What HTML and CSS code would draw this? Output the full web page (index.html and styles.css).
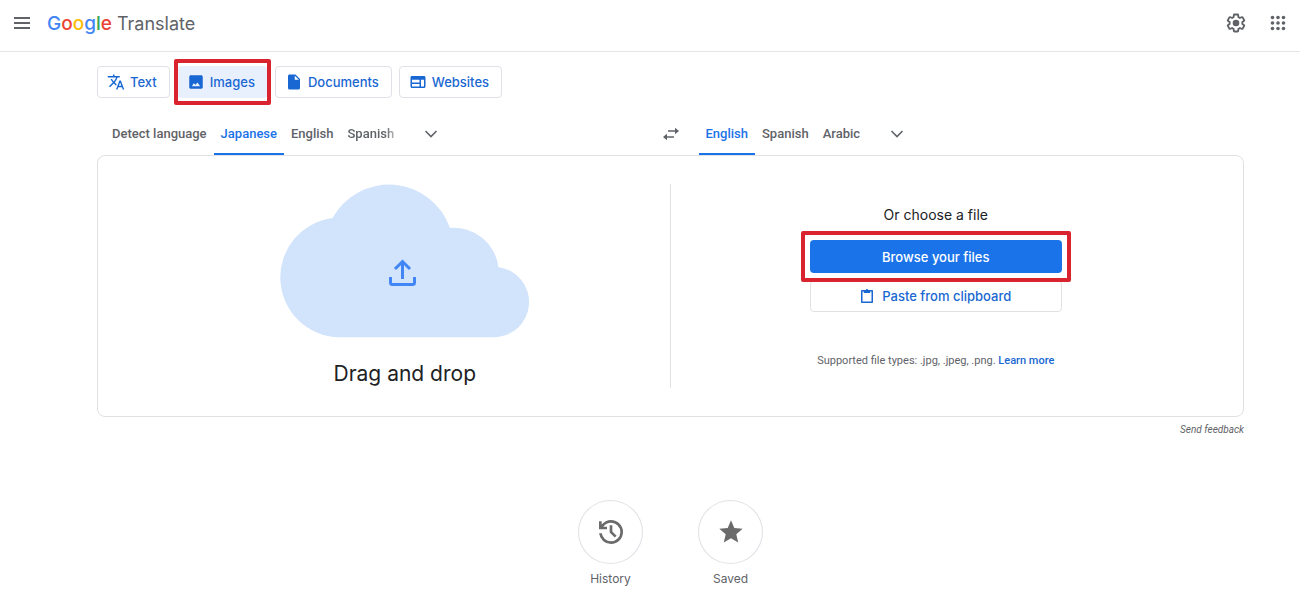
FILE: index.html
```html
<!DOCTYPE html>
<html lang="en">
<head>
<meta charset="utf-8">
<title>Google Translate</title>
<link rel="stylesheet" href="styles.css">
</head>
<body>
<header class="topbar">
  <button class="icon-btn" aria-label="Main menu">
    <svg width="18" height="12" viewBox="0 0 18 12"><path d="M1 1h16M1 6h16M1 11h16" fill="none" stroke="#5f6368" stroke-width="1.8"/></svg>
  </button>
  <a class="brand" href="#"><span class="google"><span class="b">G</span><span class="r">o</span><span class="y">o</span><span class="b">g</span><span class="g">l</span><span class="r">e</span></span><span class="product">Translate</span></a>
  <div class="tools">
    <button class="icon-btn" aria-label="Settings">
      <svg width="22" height="22" viewBox="0 0 24 24"><path d="M13.85 22.25h-3.7c-.74 0-1.36-.54-1.45-1.27l-.27-1.89c-.27-.14-.53-.29-.79-.46l-1.8.72c-.7.26-1.47-.03-1.81-.65L2.2 15.53c-.35-.66-.2-1.44.36-1.88l1.53-1.19c-.01-.15-.02-.3-.02-.46 0-.15.01-.31.02-.46l-1.52-1.19c-.59-.45-.74-1.26-.37-1.88l1.85-3.19c.34-.62 1.11-.9 1.79-.63l1.81.73c.26-.17.52-.32.78-.46l.27-1.91c.09-.7.71-1.25 1.44-1.25h3.7c.74 0 1.36.54 1.45 1.27l.27 1.89c.27.14.53.29.79.46l1.8-.72c.71-.26 1.48.03 1.82.65l1.84 3.18c.36.66.2 1.44-.36 1.88l-1.52 1.19c.01.15.02.3.02.46s-.01.31-.02.46l1.52 1.19c.56.45.72 1.23.37 1.86l-1.86 3.22c-.34.62-1.11.9-1.8.63l-1.8-.72c-.26.17-.52.32-.78.46l-.27 1.91c-.1.68-.72 1.22-1.46 1.22zm-3.23-2h2.76l.37-2.55.53-.22c.44-.18.88-.44 1.34-.78l.45-.34 2.38.96 1.38-2.4-2.03-1.58.07-.56c.03-.26.06-.51.06-.78s-.03-.53-.06-.78l-.07-.56 2.03-1.58-1.39-2.4-2.39.96-.45-.35c-.42-.32-.87-.58-1.33-.77l-.52-.22-.37-2.55h-2.76l-.37 2.55-.53.21c-.44.19-.88.44-1.34.79l-.45.33-2.38-.95-1.39 2.39 2.03 1.58-.07.56a7 7 0 0 0-.06.79c0 .26.02.53.06.78l.07.56-2.03 1.58 1.38 2.4 2.39-.96.45.35c.43.33.86.58 1.33.77l.53.22z" fill="#5f6368"/><circle cx="12" cy="12" r="3.6" fill="#5f6368"/></svg>
    </button>
    <button class="icon-btn" aria-label="Google apps">
      <svg width="16" height="16" viewBox="0 0 16 16" fill="#5f6368"><circle cx="2.5" cy="2.5" r="1.8"/><circle cx="8" cy="2.5" r="1.8"/><circle cx="13.5" cy="2.5" r="1.8"/><circle cx="2.5" cy="8" r="1.8"/><circle cx="8" cy="8" r="1.8"/><circle cx="13.5" cy="8" r="1.8"/><circle cx="2.5" cy="13.5" r="1.8"/><circle cx="8" cy="13.5" r="1.8"/><circle cx="13.5" cy="13.5" r="1.8"/></svg>
    </button>
  </div>
</header>
<main class="page">
  <nav class="modes" aria-label="Translation types">
    <button class="mode"><svg width="18" height="18" viewBox="0 0 24 24" fill="currentColor"><path d="M12.87 15.07l-2.54-2.51.03-.03A17.5 17.5 0 0 0 14.07 6H17V4h-7V2H8v2H1v2h11.17C11.5 7.92 10.44 9.75 9 11.35 8.07 10.32 7.3 9.19 6.69 8h-2c.73 1.63 1.73 3.17 2.98 4.56l-5.09 5.02L4 19l5-5 3.11 3.11.76-2.04zM18.5 10h-2L12 22h2l1.12-3h4.75L21 22h2l-4.5-12zm-2.62 7l1.62-4.33L19.12 17h-3.24z"/></svg>Text</button>
    <button class="mode selected marked"><svg width="18" height="18" viewBox="0 0 24 24" fill="currentColor"><path d="M21 19V5c0-1.100-.9-2-2-2H5c-1.100 0-2 .9-2 2v14c0 1.100.9 2 2 2h14c1.100 0 2-.9 2-2zM6.500 17.500l2.500-4 2.300 2.300 2.700-3.300 3.500 5z"/></svg>Images</button>
    <button class="mode"><svg width="18" height="18" viewBox="0 0 24 24" fill="currentColor"><path d="M6 2c-1.100 0-2 .9-2 2v16c0 1.100.9 2 2 2h12c1.100 0 2-.9 2-2V8l-6-6H6zm7 7V3.500L18.500 9H13z"/></svg>Documents</button>
    <button class="mode"><svg width="18" height="18" viewBox="0 0 24 24" fill="currentColor"><path d="M20 4H4c-1.100 0-2 .9-2 2v12c0 1.100.9 2 2 2h16c1.100 0 2-.9 2-2V6c0-1.100-.9-2-2-2zm-6 14H4v-3.500h10V18zm0-5.500H4V9h10v3.500zm6 5.500h-4V9h4v9z"/></svg>Websites</button>
  </nav>
  <div class="languages">
    <div class="source">
      <button class="lang">Detect language</button><button class="lang active">Japanese</button><button class="lang">English</button><button class="lang faded">Spanish</button>
      <button class="more" aria-label="More source languages"><svg width="14" height="8" viewBox="0 0 14 8"><path d="M1.500 1L7 6.500 12.500 1" fill="none" stroke="#5f6368" stroke-width="1.600"/></svg></button>
    </div>
    <button class="swap" aria-label="Swap languages"><svg width="18" height="14" viewBox="0 0 18 14" fill="#5f6368"><path d="M6 3.200h7V.8L17 4l-4 3.200V4.800H6zM12 9.200H5V6.800L1 10l4 3.200v-2.400h7z"/></svg></button>
    <div class="target">
      <button class="lang active">English</button><button class="lang">Spanish</button><button class="lang">Arabic</button>
      <button class="more" aria-label="More target languages"><svg width="14" height="8" viewBox="0 0 14 8"><path d="M1.500 1L7 6.500 12.500 1" fill="none" stroke="#5f6368" stroke-width="1.600"/></svg></button>
    </div>
  </div>
  <section class="panel">
    <div class="drop">
      <svg width="252" height="154" viewBox="0 0 252 154"><path d="M60 153.200A59.850 59.850 0 0 1 53.500 34A64.500 64.500 0 0 1 171 44A45 45 0 0 1 219.500 83.200A35.150 35.150 0 0 1 215 153.200Z" fill="#d2e3fc"/><g fill="none" stroke="#4285f4" stroke-width="3"><path d="M123.500 95V77M116 85l7.500-7.500 7.500 7.500"/><path d="M111.500 93v5.500q0 2 2 2h20q2 0 2-2V93"/></g></svg>
      <p class="drop-title">Drag and drop</p>
    </div>
    <div class="choose">
      <p class="choose-title">Or choose a file</p>
      <div class="actions">
        <button class="browse marked">Browse your files</button>
        <button class="paste"><svg width="14" height="16" viewBox="0 0 14 16"><path d="M1.750 2.750h10.500v11.500H1.750z" fill="none" stroke="currentColor" stroke-width="1.500" stroke-linejoin="round"/><path d="M3.800 2h1.900a1.400 1.400 0 0 1 2.600 0h1.900v3h-6.400z" fill="currentColor"/></svg>Paste from clipboard</button>
      </div>
      <p class="types">Supported file types: .jpg, .jpeg, .png. <a href="#">Learn more</a></p>
    </div>
  </section>
  <a class="feedback" href="#">Send feedback</a>
</main>
<nav class="shortcuts" aria-label="Saved translations">
  <button class="shortcut"><span class="disc"><svg width="32" height="32" viewBox="0 0 24 24" fill="#6b6b6b"><path d="M12 21q-3.450 0-6.010-2.290T3.050 13H5.100q.35 2.600 2.310 4.300T12 19q2.930 0 4.960-2.040T19 12t-2.040-4.960T12 5q-1.730 0-3.230.8T6.250 8H9v2H3V4h2v2.350q1.280-1.600 3.110-2.480T12 3q1.880 0 3.510.71t2.850 1.930 1.930 2.850T21 12t-.71 3.510-1.930 2.850-2.850 1.930T12 21zm2.800-4.800L11 12.400V7h2v4.600l3.200 3.200z"/></svg></span>History</button>
  <button class="shortcut"><span class="disc"><svg width="28" height="28" viewBox="0 0 24 24" fill="#6b6b6b"><path d="M12 17.270L18.180 21l-1.640-7.030L22 9.240l-7.190-.61L12 2 9.190 8.630 2 9.240l5.460 4.730L5.820 21z"/></svg></span>Saved</button>
</nav>
</body>
</html>
```
FILE: styles.css
```css
* { box-sizing: border-box; }
body { margin: 0; background: #fff; color: #202124; font-family: Roboto, sans-serif; font-size: 13px; }
button { font: inherit; color: inherit; background: none; border: 0; padding: 0; }
a { color: inherit; text-decoration: none; }
p { margin: 0; }
svg { display: block; flex: none; }

.topbar { display: flex; align-items: center; height: 52px; padding: 0 14px 6px 13px; border-bottom: 1px solid #e6e6e6; }
.brand { display: flex; align-items: baseline; gap: 5px; margin-left: 16px; padding-top: 2px; font-family: Inter, sans-serif; font-size: 19px; line-height: 26px; }
.google { font-weight: 500; }
.product { font-size: 18px; color: #5f6368; }
.b { color: #4285f4; }
.r { color: #ea4335; }
.y { color: #fbbc05; }
.g { color: #34a853; }
.tools { display: flex; align-items: center; gap: 23px; margin-left: auto; }

.page { padding: 14px 56px 0 97px; }
.modes { display: flex; gap: 7px; }
.mode { display: flex; align-items: center; gap: 5px; height: 32px; padding: 0 12px 0 9px; border: 1px solid #dfe1e6; border-radius: 4px; color: #1967d2; font-family: Inter, sans-serif; font-size: 13px; font-weight: 500; }
.selected { background: #e8f0fe; border-color: #e8f0fe; }
.marked { position: relative; }
.marked::after { content: ""; position: absolute; inset: -8px -4px; border: 4px solid #d9232e; border-radius: 2px; }

.languages { display: grid; grid-template-columns: 1fr 56px 1fr; height: 44px; margin-top: 13px; }
.source, .target { display: flex; }
.source { padding-left: 8px; }
.lang { padding: 2px 7px 0; color: #5f6368; font-weight: 500; border-bottom: 2px solid transparent; }
.active { color: #1a73e8; border-bottom-color: #1a73e8; }
.faded { mask-image: linear-gradient(to right, #000 75%, transparent); }
.more { margin-left: 23px; padding-top: 2px; }
.swap { display: flex; align-items: center; justify-content: center; padding-top: 2px; }

.panel { display: grid; grid-template-columns: 1fr 1fr; padding: 28px 0; border: 1px solid #dfe1e5; border-radius: 8px; }
.drop, .choose { display: flex; flex-direction: column; align-items: center; }
.drop { padding-left: 42px; border-right: 1px solid #dfe1e5; }
.drop-title { margin-top: 22px; font-family: Inter, sans-serif; font-size: 21px; line-height: 28px; }
.choose { padding: 22px 42px 0 0; font-family: Inter, sans-serif; }
.choose-title { font-size: 14px; line-height: 18px; }
.actions { display: flex; flex-direction: column; gap: 7px; width: 252px; margin-top: 16px; font-weight: 500; }
.browse { height: 33px; border-radius: 4px; background: #1a73e8; color: #fff; }
.browse.marked::after { inset: -9px; }
.paste { display: flex; align-items: center; justify-content: center; gap: 8px; height: 32px; border: 1px solid #dfe1e5; border-radius: 4px; color: #1967d2; }
.types { margin-top: 41px; font-family: Roboto, sans-serif; font-size: 11px; line-height: 16px; color: #5f6368; }
.types a { color: #1967d2; font-weight: 500; }
.feedback { display: block; width: fit-content; margin: 6px 0 0 auto; font-size: 10px; line-height: 14px; font-style: italic; color: #5f6368; }

.shortcuts { display: flex; justify-content: center; gap: 55px; margin: 63px 0 0 41px; }
.shortcut { display: flex; flex-direction: column; align-items: center; gap: 7px; font-family: Inter, sans-serif; font-size: 12px; line-height: 16px; color: #5f6368; }
.disc { display: grid; place-items: center; width: 65px; height: 64px; border: 1px solid #dfe1e5; border-radius: 50%; }
```
